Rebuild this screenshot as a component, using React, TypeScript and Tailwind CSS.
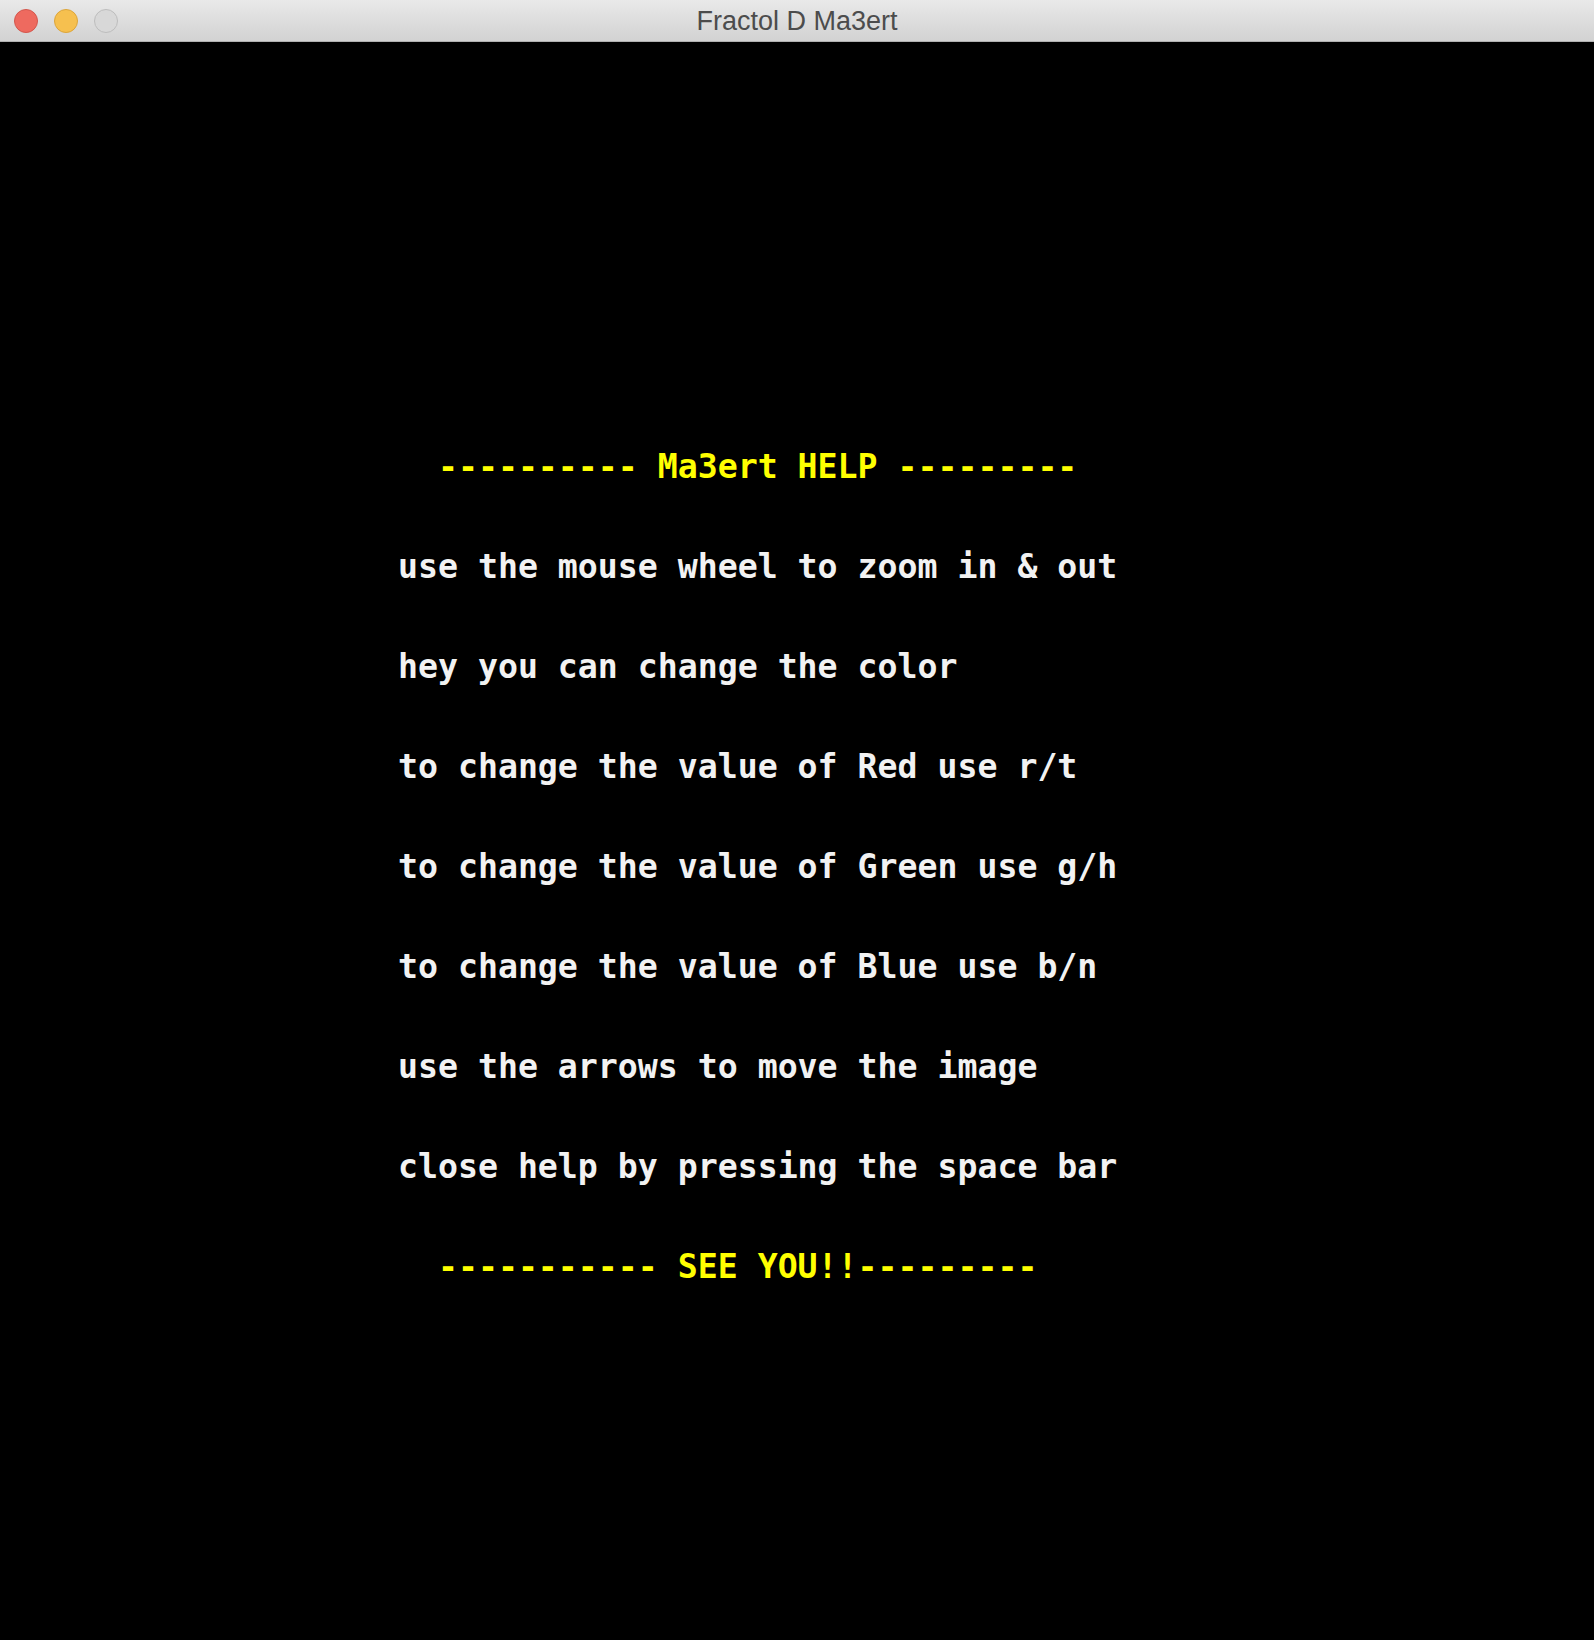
import React from "react";

const lines: { text: string; yellow?: boolean }[] = [
  { text: "  ---------- Ma3ert HELP ---------", yellow: true },
  { text: "use the mouse wheel to zoom in & out" },
  { text: "hey you can change the color" },
  { text: "to change the value of Red use r/t" },
  { text: "to change the value of Green use g/h" },
  { text: "to change the value of Blue use b/n" },
  { text: "use the arrows to move the image" },
  { text: "close help by pressing the space bar" },
  { text: "  ----------- SEE YOU!!---------", yellow: true },
];

export default function App() {
  return (
    <div className="w-[1594px] h-[1640px] flex flex-col bg-black">
      {/* window title bar */}
      <div className="h-[42px] shrink-0 grid grid-cols-[200px_1fr_200px] items-center bg-gradient-to-b from-[#e9e9e9] to-[#d2d2d2] border-b border-[#b1b1b1]">
        <div className="flex items-center gap-[16px] pl-[14px]">
          <span className="w-[24px] h-[24px] rounded-full bg-[#ee6a5f] border border-[#d3574d]" />
          <span className="w-[24px] h-[24px] rounded-full bg-[#f6c04f] border border-[#dca53b]" />
          <span className="w-[24px] h-[24px] rounded-full bg-[#d8d8d8] border border-[#bdbdbd]" />
        </div>
        <p className="text-center text-[27px] leading-none pt-[2px] text-[#4c4c4c] font-['Liberation_Sans',Arial,sans-serif]">
          Fractol D Ma3ert
        </p>
        <div />
      </div>

      {/* help screen */}
      <div className="flex-1 pt-[375px] pl-[398px] font-['DejaVu_Sans_Mono','Liberation_Mono',monospace] font-bold text-[33.2px]">
        {lines.map((line, i) => (
          <p
            key={i}
            className={`h-[100px] leading-[100px] whitespace-pre ${line.yellow ? "text-[#ffff00]" : "text-[#f2f2f2]"}`}
          >
            {line.text}
          </p>
        ))}
      </div>
    </div>
  );
}
